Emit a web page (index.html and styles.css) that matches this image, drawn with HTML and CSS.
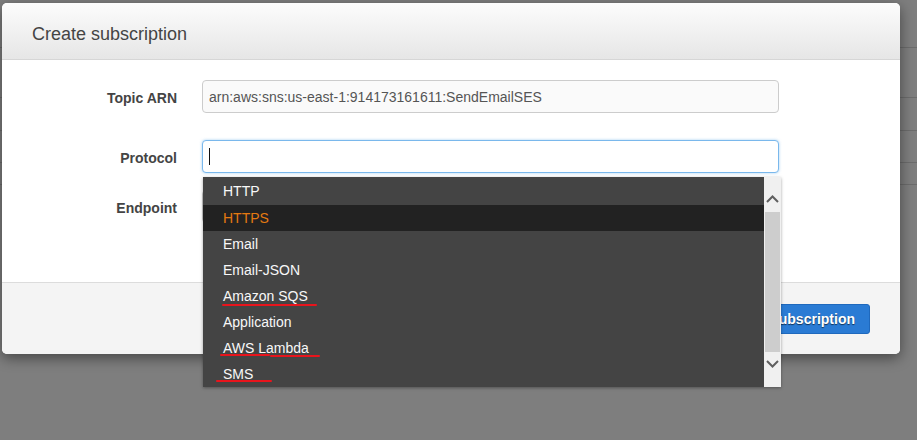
FILE: index.html
```html
<!DOCTYPE html>
<html>
<head>
<meta charset="utf-8">
<link rel="stylesheet" href="styles.css">
</head>
<body>
<div class="page">
  <div class="bg-row r1"></div>
  <div class="bg-row r2"></div>
  <div class="bg-row r3"></div>
  <div class="bg-row r4"></div>
  <div class="bg-row r5"></div>
</div>

<div class="modal">
  <div class="modal-header"><h3 class="modal-title">Create subscription</h3></div>
  <div class="modal-body">
    <div class="form-row row-topic">
      <label class="form-label">Topic ARN</label>
      <div class="input input-readonly">arn:aws:sns:us-east-1:914173161611:SendEmailSES</div>
    </div>
    <div class="form-row row-protocol">
      <label class="form-label">Protocol</label>
      <div class="input input-focus"><span class="caret"></span></div>
    </div>
    <div class="form-row">
      <label class="form-label">Endpoint</label>
      <div class="input"></div>
    </div>
  </div>
  <div class="modal-footer">
    <button class="btn-primary">Create subscription</button>
  </div>
</div>

<div class="dropdown">
  <ul class="options">
    <li class="option">HTTP</li>
    <li class="option active">HTTPS</li>
    <li class="option">Email</li>
    <li class="option">Email-JSON</li>
    <li class="option">Amazon SQS<span class="mark m-sqs"></span></li>
    <li class="option">Application</li>
    <li class="option">AWS Lambda<span class="mark m-lam1"></span><span class="mark m-lam2"></span></li>
    <li class="option">SMS<span class="mark m-sms"></span></li>
  </ul>
  <div class="scrollbar">
    <svg class="arrow" width="17" height="12" viewBox="0 0 17 12"><polyline points="3,9 8.5,3.5 14,9" fill="none" stroke="#5f5f5f" stroke-width="2"/></svg>
    <div class="thumb"></div>
    <svg class="arrow" width="17" height="12" viewBox="0 0 17 12"><polyline points="3,3 8.5,8.5 14,3" fill="none" stroke="#5f5f5f" stroke-width="2"/></svg>
  </div>
</div>
</body>
</html>
```

FILE: styles.css
```css
html, body {
  margin: 0;
  padding: 0;
}
body {
  width: 917px;
  height: 440px;
  overflow: hidden;
  background: #7e7e7e;
  font-family: "Liberation Sans", Arial, sans-serif;
  position: relative;
}
.page {
  display: flex;
  flex-direction: column;
}
.bg-row {
  border-bottom: 1px solid #6c6c6c;
}
.r1 { height: 47px; }
.r2 { height: 49px; }
.r3 { height: 32px; }
.r4 { height: 31px; }
.r5 { height: 21px; }

.modal {
  position: absolute;
  left: 2px;
  top: 3px;
  width: 898px;
  background: #fff;
  border-radius: 5px;
  box-shadow: 0 4px 14px rgba(0,0,0,0.45);
  overflow: hidden;
}
.modal-header {
  height: 56px;
  border-bottom: 1px solid #d6d6d6;
  background: linear-gradient(#fcfcfc, #e6e6e6);
  padding-left: 30px;
  display: flex;
  align-items: center;
}
.modal-title {
  margin: 0;
  font-size: 18px;
  font-weight: normal;
  color: #444;
  padding-top: 7px;
}
.modal-body {
  height: 223px;
  box-sizing: border-box;
  padding-top: 20px;
  border-bottom: 1px solid #dcdcdc;
}
.form-row {
  display: grid;
  grid-template-columns: 175px 577px;
  column-gap: 25px;
  align-items: center;
}
.row-topic { margin-bottom: 27px; }
.row-protocol { margin-bottom: 17px; }
.form-label {
  text-align: right;
  font-weight: bold;
  font-size: 14px;
  color: #444;
  padding-top: 2px;
}
.input {
  height: 33px;
  box-sizing: border-box;
  border: 1px solid #ccc;
  border-radius: 4px;
  background: #fff;
  font-size: 14px;
  color: #555;
  padding: 0 6px;
  display: flex;
  align-items: center;
}
.input-readonly {
  background: #fafafa;
}
.input-focus {
  border-color: #7ab8ec;
  box-shadow: 0 0 3px rgba(102,175,233,0.6);
}
.caret {
  width: 1px;
  height: 17px;
  background: #111;
}
.modal-footer {
  height: 71px;
  box-sizing: border-box;
  background: #f4f4f4;
  padding: 21px 30px 0 0;
  display: flex;
  justify-content: flex-end;
  align-items: flex-start;
}
.btn-primary {
  height: 30px;
  padding: 0 14px;
  border: 1px solid #1f69bd;
  border-radius: 3px;
  background: #2a7bd4;
  color: #fff;
  font-family: "Liberation Sans", Arial, sans-serif;
  font-weight: bold;
  font-size: 14px;
  text-shadow: 0 1px 1px rgba(0,0,0,0.6);
}

.dropdown {
  position: absolute;
  left: 203px;
  top: 177px;
  width: 578px;
  height: 210px;
  background: #444;
  display: flex;
  box-shadow: 0 1px 3px rgba(0,0,0,0.35);
}
.options {
  list-style: none;
  margin: 0;
  padding: 1px 0 0 0;
  flex: 1;
}
.option {
  position: relative;
  height: 26px;
  line-height: 26px;
  padding-left: 20px;
  font-size: 14px;
  color: #f8f8f8;
}
.option:first-child {
  height: 27px;
}
.option.active {
  background: #222;
  color: #e47911;
}
.mark {
  position: absolute;
  height: 2px;
  background: #e8141c;
  border-radius: 1px;
}
.m-sqs { left: 19px; width: 95px; top: 21px; }
.m-lam1 { left: 17px; width: 50px; top: 19px; }
.m-lam2 { left: 67px; width: 50px; top: 20px; }
.m-sms { left: 13px; width: 56px; top: 19px; }

.scrollbar {
  width: 17px;
  background: #f0f0f0;
  display: flex;
  flex-direction: column;
  align-items: center;
}
.arrow {
  display: block;
  margin-top: 16px;
  height: 12px;
}
.thumb {
  width: 15px;
  height: 140px;
  background: #cdcdcd;
  margin-top: 7px;
}
.thumb + .arrow {
  margin-top: 6px;
}
```
